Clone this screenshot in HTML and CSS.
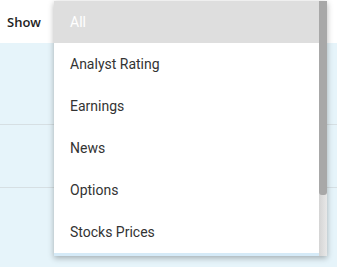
FILE: index.html
```html
<!DOCTYPE html>
<html lang="en">
<head>
  <meta charset="UTF-8" />
  <meta name="viewport" content="width=device-width, initial-scale=1.0" />
  <title>Show filter</title>
  <link rel="stylesheet" href="styles.css">
</head>
<body>
  <header class="toolbar">
    <span class="show-label">Show</span>
  </header>
  <main class="feed">
    <div class="feed-row first"></div>
    <div class="feed-row"></div>
    <div class="feed-row last"></div>
  </main>

  <div class="dropdown">
    <ul class="options">
      <li class="selected">All</li>
      <li>Analyst Rating</li>
      <li>Earnings</li>
      <li>News</li>
      <li>Options</li>
      <li>Stocks Prices</li>
      <li class="hover"></li>
    </ul>
    <div class="scrollbar">
      <div class="thumb"></div>
    </div>
  </div>
</body>
</html>
```

FILE: styles.css
```css
:root {
  --text: #333;
  --page: #e6f4fa;
  --line: #d6dfe3;
}
body {
  margin: 0;
  font-family: Roboto, "Liberation Sans", sans-serif;
  background: var(--page);
  height: 267px;
  overflow: hidden;
}
.toolbar {
  height: 43px;
  background: #fff;
  display: flex;
  align-items: center;
  padding-left: 7px;
}
.show-label {
  font-family: "Open Sans", sans-serif;
  font-weight: 600;
  font-size: 13px;
  color: #222;
  margin-top: 1px;
}
.feed-row {
  height: 62px;
  border-bottom: 1px solid var(--line);
}
.feed-row.first { height: 81px; }
.feed-row.last { border-bottom: none; }

.dropdown {
  position: absolute;
  left: 54px;
  top: 1px;
  width: 273px;
  height: 255px;
  background: #fff;
  display: flex;
  overflow: hidden;
  box-shadow: 0 2px 6px rgba(0, 0, 0, 0.3);
}
.options {
  list-style: none;
  margin: 0;
  padding: 0;
  flex: 1;
}
.options li {
  height: 42px;
  display: flex;
  align-items: center;
  padding-left: 16px;
  font-size: 14px;
  color: var(--text);
}
.options li.selected {
  background: #dedede;
  color: #fff;
}
.options li.hover {
  background: #d5eaf7;
}
.scrollbar {
  width: 8px;
  background: linear-gradient(to right, #d4d4d4, #e8e8e8);
  display: flex;
  flex-direction: column;
}
.thumb {
  height: 194px;
  background: #a8a8a8;
  border-radius: 0 0 3px 3px;
}
```
